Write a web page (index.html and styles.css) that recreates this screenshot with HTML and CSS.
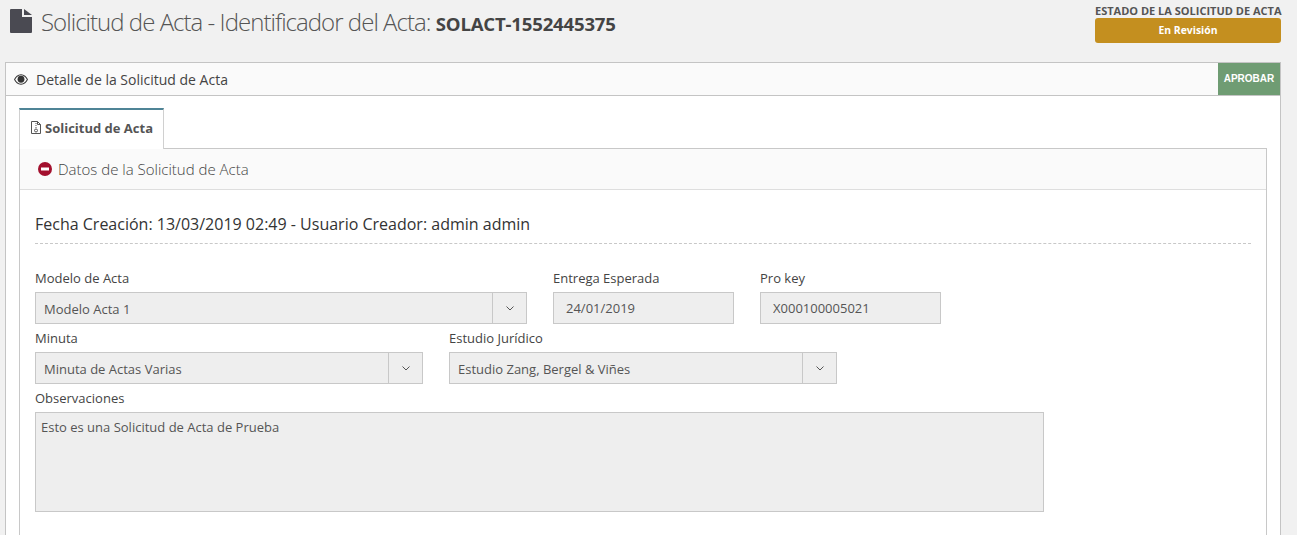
FILE: index.html
```html
<!DOCTYPE html>
<html lang="es">
<head>
    <meta charset="UTF-8">
    <title>Solicitud de Acta</title>
    <link rel="stylesheet" href="styles.css">
</head>
<body>
    <header class="page-head">
        <h1 class="page-title">
            <svg class="title-icon" viewBox="0 0 22 24" width="22" height="24" aria-hidden="true">
                <path d="M1 0h11v8h10v15a1 1 0 0 1-1 1H1a1 1 0 0 1-1-1V1a1 1 0 0 1 1-1z"/>
                <path d="M14 0l8 6h-8z"/>
            </svg>
            <span>Solicitud de Acta - Identificador del Acta: <strong>SOLACT-1552445375</strong></span>
        </h1>
        <div class="status">
            <div class="status-label">ESTADO DE LA SOLICITUD DE ACTA</div>
            <div class="status-badge">En Revisión</div>
        </div>
    </header>

    <section class="panel">
        <div class="panel-head">
            <div class="panel-title">
                <svg viewBox="0 0 16 12" width="14" height="11" aria-hidden="true">
                    <path fill-rule="evenodd" d="M8 0c3.600 0 6.500 2.600 8 6-1.500 3.400-4.400 6-8 6S1.500 9.400 0 6c1.500-3.400 4.400-6 8-6zM8 1.200C5.200 1.200 2.800 3.100 1.300 6c1.500 2.900 3.900 4.800 6.700 4.800s5.200-1.900 6.700-4.800C13.200 3.100 10.800 1.200 8 1.200z"/>
                    <circle cx="8" cy="5.700" r="3.900"/>
                </svg>
                Detalle de la Solicitud de Acta
            </div>
            <button class="approve" type="button">APROBAR</button>
        </div>

        <div class="panel-body">
            <div class="tabs">
                <div class="tab">
                    <svg viewBox="0 0 10 13" width="10" height="13" aria-hidden="true">
                        <path d="M.5.500h6l3 3v9h-9z M6.500.500v3h3" fill="none" stroke="#555" stroke-width="1"/>
                        <path d="M4.500 2h1v1h-1zM4.500 4h1v1h-1zM4.500 6h1v1h-1z" fill="#555"/>
                        <circle cx="5" cy="9.500" r="1.500" fill="none" stroke="#555" stroke-width="1"/>
                    </svg>
                    Solicitud de Acta
                </div>
            </div>

            <div class="box">
                <div class="box-head">
                    <svg viewBox="0 0 14 14" width="14" height="14" aria-hidden="true">
                        <circle cx="7" cy="7" r="7" fill="#a3102e"/>
                        <rect x="3" y="5.500" width="8" height="3" fill="#fff"/>
                    </svg>
                    Datos de la Solicitud de Acta
                </div>
                <div class="box-body">
                    <h3 class="info-line">Fecha Creación: 13/03/2019 02:49 - Usuario Creador: admin admin</h3>

                    <div class="row first">
                        <div class="field w-492">
                            <label>Modelo de Acta</label>
                            <div class="select">
                                <span>Modelo Acta 1</span>
                                <span class="arrow"><svg viewBox="0 0 8 5" width="8" height="5"><path d="M.5.500L4 4 7.500.500" fill="none" stroke="#555"/></svg></span>
                            </div>
                        </div>
                        <div class="field w-181">
                            <label>Entrega Esperada</label>
                            <input class="input" type="text" value="24/01/2019" disabled>
                        </div>
                        <div class="field w-181">
                            <label>Pro key</label>
                            <input class="input" type="text" value="X000100005021" disabled>
                        </div>
                    </div>

                    <div class="row">
                        <div class="field w-388">
                            <label>Minuta</label>
                            <div class="select">
                                <span>Minuta de Actas Varias</span>
                                <span class="arrow"><svg viewBox="0 0 8 5" width="8" height="5"><path d="M.5.500L4 4 7.500.500" fill="none" stroke="#555"/></svg></span>
                            </div>
                        </div>
                        <div class="field w-388">
                            <label>Estudio Jurídico</label>
                            <div class="select">
                                <span>Estudio Zang, Bergel &amp; Viñes</span>
                                <span class="arrow"><svg viewBox="0 0 8 5" width="8" height="5"><path d="M.5.500L4 4 7.500.500" fill="none" stroke="#555"/></svg></span>
                            </div>
                        </div>
                    </div>

                    <div class="row">
                        <div class="field w-1009">
                            <label>Observaciones</label>
                            <textarea class="textarea" disabled>Esto es una Solicitud de Acta de Prueba</textarea>
                        </div>
                    </div>
                </div>
            </div>
        </div>
    </section>
</body>
</html>
```

FILE: styles.css
```css
html, body {
    height: 535px;
    overflow: hidden;
}
body {
    box-sizing: border-box;
    margin: 0;
    padding: 0 16px 0 5px;
    background-color: #f1f1f1;
    color: #444;
    font-family: "Open Sans", sans-serif;
    font-size: 13px;
}
.page-head {
    display: flex;
    justify-content: space-between;
    height: 62px;
}
.page-title {
    display: flex;
    align-items: flex-start;
    margin: 9px 0 0 5px;
    font-size: 24px;
    font-weight: 300;
    line-height: 26px;
    letter-spacing: -0.97px;
    color: #555;
}
.page-title strong {
    font-size: 18.600px;
    font-weight: 700;
    letter-spacing: -0.2px;
    color: #444;
}
.title-icon {
    margin-right: 9px;
    fill: #4a4a52;
}
.status {
    width: 186px;
    padding-top: 3px;
}
.status-label {
    font-size: 11px;
    font-weight: 700;
    line-height: 15px;
    white-space: nowrap;
    color: #555;
}
.status-badge {
    height: 25px;
    border-radius: 3px;
    background-color: #c48f1f;
    color: #fff;
    font-size: 10.400px;
    font-weight: 700;
    line-height: 25px;
    text-align: center;
}
.panel {
    box-sizing: border-box;
    height: 473px;
    border: 1px solid #c4c4c4;
    border-bottom: none;
    background-color: #fff;
}
.panel-head {
    display: flex;
    justify-content: space-between;
    height: 32px;
    border-bottom: 1px solid #c4c4c4;
    background-color: #fafafa;
}
.panel-title {
    display: flex;
    align-items: center;
    gap: 8px;
    padding-left: 8px;
    font-size: 14px;
    color: #444;
}
.panel-title svg {
    fill: #333;
}
.approve {
    width: 62px;
    padding: 0 0 2px;
    border: none;
    background-color: #6f9c73;
    color: #fff;
    font-family: "Liberation Sans", Arial, sans-serif;
    font-size: 10px;
    font-weight: 700;
}
.panel-body {
    padding: 12px 13px 0;
}
.tabs {
    display: flex;
    height: 40px;
}
.tab {
    display: flex;
    align-items: center;
    gap: 4px;
    width: 145px;
    box-sizing: border-box;
    height: 41px;
    padding: 0 0 4px 11px;
    border: 1px solid #d0d0d0;
    border-top: 2px solid #4f8496;
    border-bottom: none;
    background-color: #fff;
    font-size: 13px;
    font-weight: 700;
    color: #555;
    position: relative;
    z-index: 1;
}
.box {
    box-sizing: border-box;
    height: 387px;
    border: 1px solid #c8c8c8;
    border-bottom: none;
}
.box-head {
    display: flex;
    align-items: center;
    gap: 6px;
    height: 40px;
    padding-left: 18px;
    border-bottom: 1px solid #dedede;
    background-color: #fafafa;
    font-size: 15px;
    font-weight: 300;
    color: #444;
}
.box-body {
    padding: 21px 15px 0;
}
.info-line {
    box-sizing: content-box;
    height: 32px;
    margin: 0 0 25px;
    border-bottom: 1px dashed #c8c8c8;
    font-size: 16px;
    font-weight: 400;
    line-height: 26px;
    color: #333;
}
.row {
    display: flex;
    gap: 26px;
    margin-top: 5px;
}
.row.first {
    margin-top: 0;
}
.field label {
    display: block;
    height: 23px;
    font-size: 13px;
    line-height: 18px;
    color: #444;
}
.w-492 { width: 492px; }
.w-388 { width: 388px; }
.w-181 { width: 181px; }
.w-1009 { width: 1009px; }
.select {
    display: flex;
    justify-content: space-between;
    box-sizing: border-box;
    height: 32px;
    padding-left: 8px;
    border: 1px solid #c8c8c8;
    background-color: #eee;
    font-size: 13px;
    line-height: 33px;
    color: #555;
}
.arrow {
    display: flex;
    align-items: center;
    justify-content: center;
    box-sizing: border-box;
    width: 34px;
    border-left: 1px solid #c8c8c8;
}
.input {
    display: block;
    box-sizing: border-box;
    width: 100%;
    height: 32px;
    padding: 0 12px;
    border: 1px solid #c8c8c8;
    background-color: #eee;
    font-family: "Open Sans", sans-serif;
    font-size: 13px;
    color: #555;
}
.textarea {
    display: block;
    box-sizing: border-box;
    width: 100%;
    height: 100px;
    padding: 5px;
    border: 1px solid #c8c8c8;
    background-color: #eee;
    font-family: "Open Sans", sans-serif;
    font-size: 13px;
    color: #555;
    resize: none;
}
```
